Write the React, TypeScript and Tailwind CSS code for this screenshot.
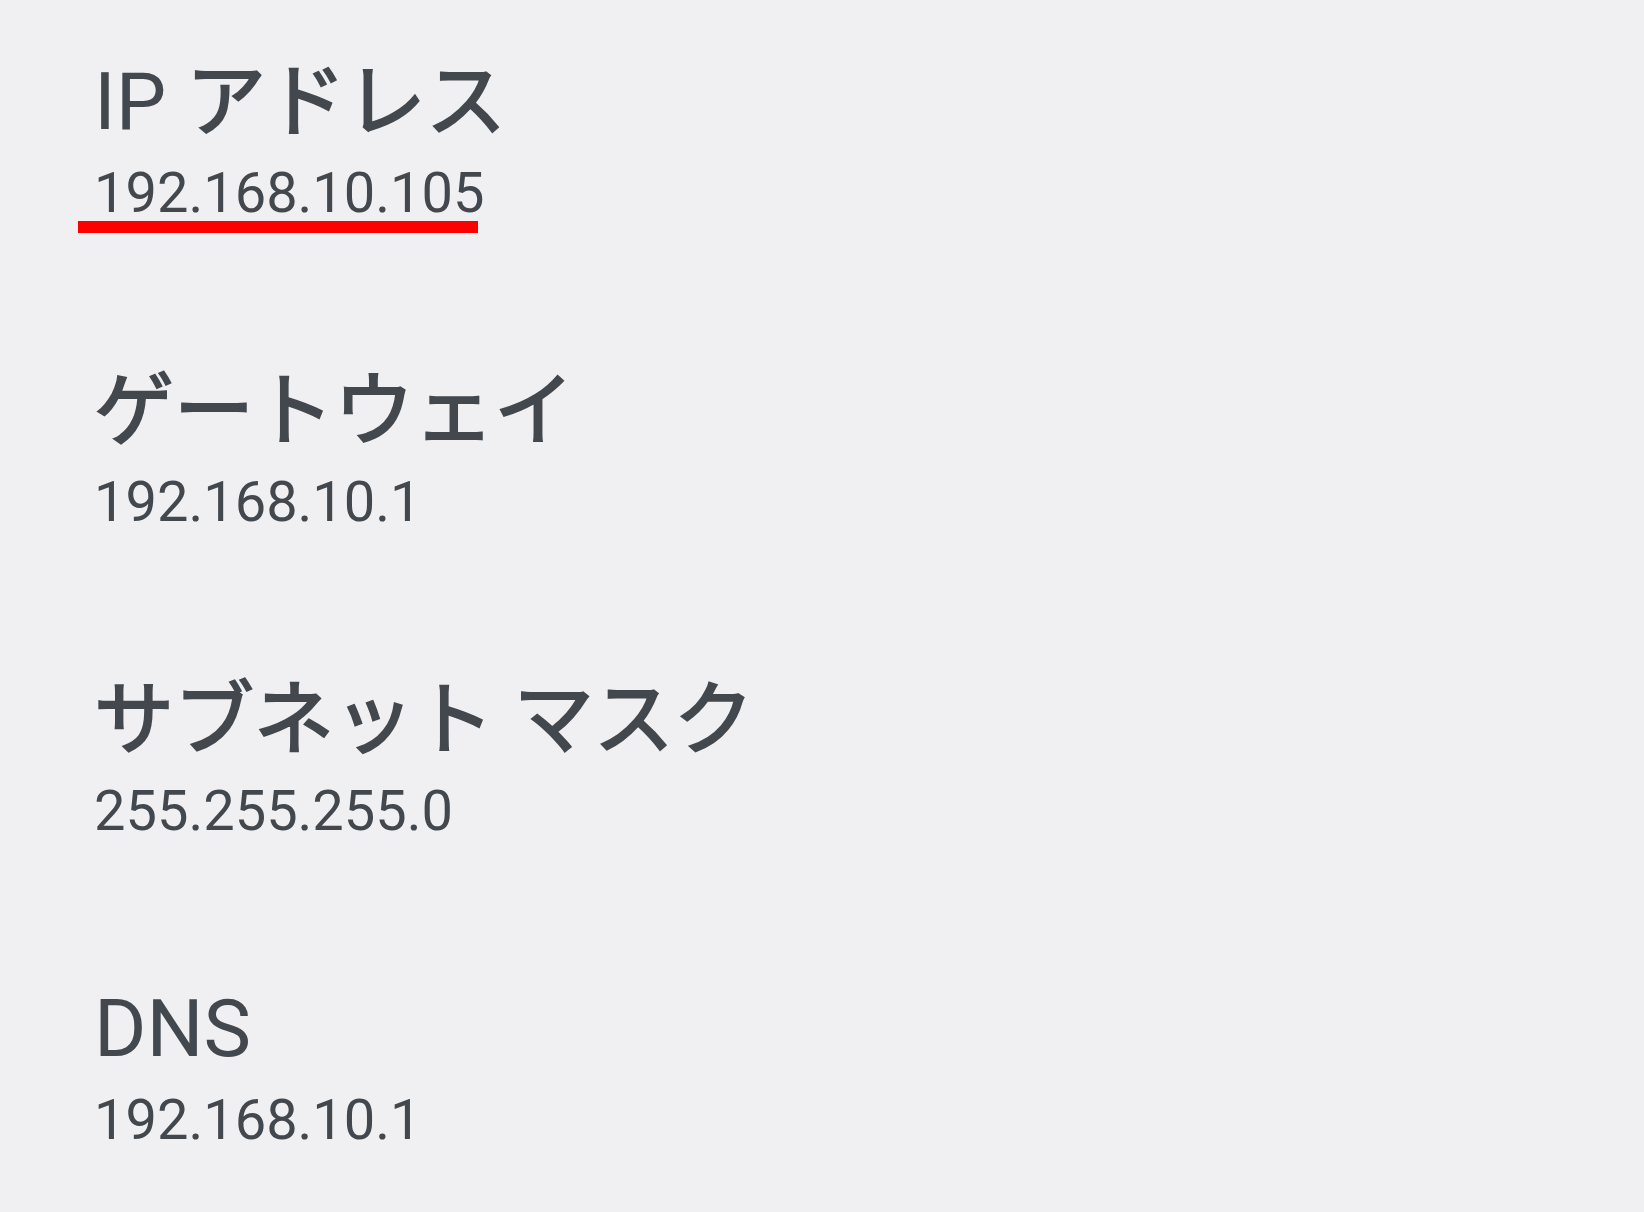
type Part = { text: string; jp?: boolean };

const items: { label: Part[]; value: string; marked?: boolean }[] = [
  { label: [{ text: "IP " }, { text: "アドレス", jp: true }], value: "192.168.10.105", marked: true },
  { label: [{ text: "ゲートウェイ", jp: true }], value: "192.168.10.1" },
  { label: [{ text: "サブネット マスク", jp: true }], value: "255.255.255.0" },
  { label: [{ text: "DNS" }], value: "192.168.10.1" },
];

function InfoRow({ label, value, marked }: { label: Part[]; value: string; marked?: boolean }) {
  return (
    <div className="flex flex-col items-start">
      <p className="text-[80px] leading-[80px] text-[#43484e] whitespace-nowrap">
        {label.map((p, i) => (
          // the CJK fallback renders a bit light, thicken it slightly
          <span key={i} className={p.jp ? "[-webkit-text-stroke-width:2px] [-webkit-text-stroke-color:#43484e]" : ""}>
            {p.text}
          </span>
        ))}
      </p>
      <div className="relative mt-[19px]">
        <p className="text-[56px] leading-[64px] text-[#43484e] whitespace-nowrap">{value}</p>
        {/* red annotation underline */}
        {marked && <span className="absolute left-[-16px] top-[60px] h-[12px] w-[400px] bg-[#ff0000]" />}
      </div>
    </div>
  );
}

export default function App() {
  return (
    <div className="min-h-screen w-full bg-[#f0f0f2] pl-[94px] pt-[62px] font-['Roboto','Noto_Sans_CJK_JP',sans-serif]">
      <div className="flex flex-col gap-[146px]">
        {items.map((it, i) => (
          <InfoRow key={i} {...it} />
        ))}
      </div>
    </div>
  );
}
